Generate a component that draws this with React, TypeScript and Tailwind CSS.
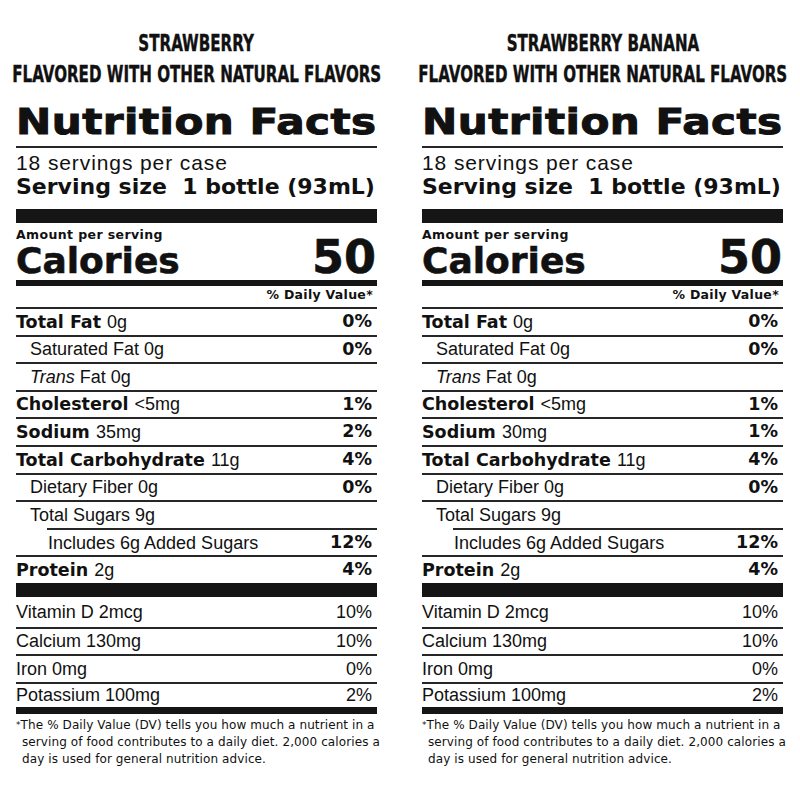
import React from "react";

const heavy = "font-['DejaVu_Sans',sans-serif] font-bold";
const plain = "font-['Liberation_Sans',Arial,sans-serif] font-normal";

type Nutrient = {
  bold?: string;
  italic?: string;
  text: string;
  dv?: string;
  indent?: "none" | "one" | "two";
};

type Panel = {
  flavor: string;
  sodium: string;
  sodiumDv: string;
};

const panels: Panel[] = [
  { flavor: "STRAWBERRY", sodium: "35mg", sodiumDv: "2%" },
  { flavor: "STRAWBERRY BANANA", sodium: "30mg", sodiumDv: "1%" },
];

// row heights follow the printed label, which is a little uneven
const vitamins = [
  { label: "Vitamin D 2mcg", dv: "10%", h: "h-[30px]" },
  { label: "Calcium 130mg", dv: "10%", h: "h-[25px]" },
  { label: "Iron 0mg", dv: "0%", h: "h-[26px]" },
  { label: "Potassium 100mg", dv: "2%", h: "h-[23px]" },
];

function Rule({ inset = false }: { inset?: boolean }) {
  return <div className={inset ? "ml-[31px] h-[2px] bg-[#262626]" : "h-[2px] bg-[#262626]"} />;
}

function NutrientRow({ n }: { n: Nutrient }) {
  const pad = n.indent === "two" ? "pl-[32px]" : n.indent === "one" ? "pl-[14px]" : "pl-0";
  return (
    <div className={`flex h-[25.6px] items-center justify-between pr-[5px] ${pad}`}>
      <span className="whitespace-nowrap leading-none">
        {n.bold && <span className={`${heavy} text-[17.5px]`}>{n.bold} </span>}
        {n.italic && <span className={`${plain} text-[18px] italic`}>{n.italic} </span>}
        <span className={`${plain} text-[18px]`}>{n.text}</span>
      </span>
      {n.dv && <span className={`${heavy} text-[17.5px] leading-none`}>{n.dv}</span>}
    </div>
  );
}

function FlavorLine({ children, className = "" }: { children: React.ReactNode; className?: string }) {
  return (
    <div className={`flex justify-center ${className}`}>
      <div className="w-max shrink-0 scale-x-[0.73] whitespace-nowrap text-[23px] leading-[23px] [-webkit-text-stroke:0.4px_#111]">
        {children}
      </div>
    </div>
  );
}

function Label({ panel }: { panel: Panel }) {
  const rows: Nutrient[] = [
    { bold: "Total Fat", text: "0g", dv: "0%" },
    { text: "Saturated Fat 0g", dv: "0%", indent: "one" },
    { italic: "Trans", text: "Fat 0g", indent: "one" },
    { bold: "Cholesterol", text: "<5mg", dv: "1%" },
    { bold: "Sodium", text: panel.sodium, dv: panel.sodiumDv },
    { bold: "Total Carbohydrate", text: "11g", dv: "4%" },
    { text: "Dietary Fiber 0g", dv: "0%", indent: "one" },
    { text: "Total Sugars 9g", indent: "one" },
    { text: "Includes 6g Added Sugars", dv: "12%", indent: "two" },
    { bold: "Protein", text: "2g", dv: "4%" },
  ];

  return (
    <div className="flex w-[361px] flex-col text-[#111]">
      {/* flavour heading */}
      <div className="pt-[32px] font-['DejaVu_Sans_Condensed','DejaVu_Sans',sans-serif] font-bold">
        <FlavorLine>{panel.flavor}</FlavorLine>
        <FlavorLine className="mt-[8px]">FLAVORED WITH OTHER NATURAL FLAVORS</FlavorLine>
      </div>

      <h1
        className={`${heavy} mt-[18px] w-max origin-left scale-x-[1.17] whitespace-nowrap text-[36px] leading-[36px] tracking-[0.4px] [-webkit-text-stroke:1px_#111]`}
      >
        Nutrition Facts
      </h1>
      <div className="mt-[6px]">
        <Rule />
      </div>
      <div className={`${plain} mt-[4px] text-[21px] leading-[21px] tracking-[0.9px]`}>18 servings per case</div>
      <div className={`${heavy} mt-[3px] whitespace-nowrap text-[22px] leading-[22px]`}>
        Serving size&nbsp; 1 bottle (93mL)
      </div>
      <div className="mt-[11px] h-[14px] bg-[#151515]" />

      {/* calories */}
      <div className={`${heavy} mt-[6px] text-[12.5px] leading-[12px] tracking-[0.4px]`}>Amount per serving</div>
      <div className={`${heavy} mt-[1px] flex items-baseline justify-between pr-[1px]`}>
        <span className="text-[36px] leading-[30px] [-webkit-text-stroke:0.6px_#111]">Calories</span>
        <span className="text-[46px] leading-[30px] [-webkit-text-stroke:0.6px_#111]">50</span>
      </div>
      <div className="mt-[4px] h-[6px] bg-[#151515]" />
      <div className={`${heavy} mt-[2px] pr-[4px] text-right text-[12.5px] leading-[13px] tracking-[0.3px]`}>
        % Daily Value*
      </div>
      <div className="mt-[6px]">
        <Rule />
      </div>

      {/* nutrients */}
      {rows.map((n, i) => (
        <React.Fragment key={i}>
          <NutrientRow n={n} />
          {i < rows.length - 1 && <Rule inset={n.text === "Total Sugars 9g"} />}
        </React.Fragment>
      ))}
      <div className="h-[14px] bg-[#151515]" />

      {vitamins.map((v, i) => (
        <React.Fragment key={v.label}>
          <div className={`${plain} flex ${v.h} items-center justify-between pr-[5px] text-[18px] leading-none`}>
            <span>{v.label}</span>
            <span>{v.dv}</span>
          </div>
          {i < vitamins.length - 1 && <Rule />}
        </React.Fragment>
      ))}
      <div className="h-[7px] bg-[#151515]" />

      {/* footnote */}
      <div className="mt-[3px] whitespace-nowrap font-['DejaVu_Sans',sans-serif] text-[12px] leading-[17px] tracking-[0.1px] text-[#111]">
        <div>
          <span className="align-top text-[9px]">*</span>The % Daily Value (DV) tells you how much a nutrient in a
        </div>
        <div className="pl-[6px]">serving of food contributes to a daily diet. 2,000 calories a</div>
        <div className="pl-[6px]">day is used for general nutrition advice.</div>
      </div>
    </div>
  );
}

export default function App() {
  return (
    <div className="h-[800px] w-[800px] overflow-hidden bg-white">
      <div className="flex gap-[45px] pl-[16px]">
        {panels.map((p) => (
          <Label key={p.flavor} panel={p} />
        ))}
      </div>
    </div>
  );
}
